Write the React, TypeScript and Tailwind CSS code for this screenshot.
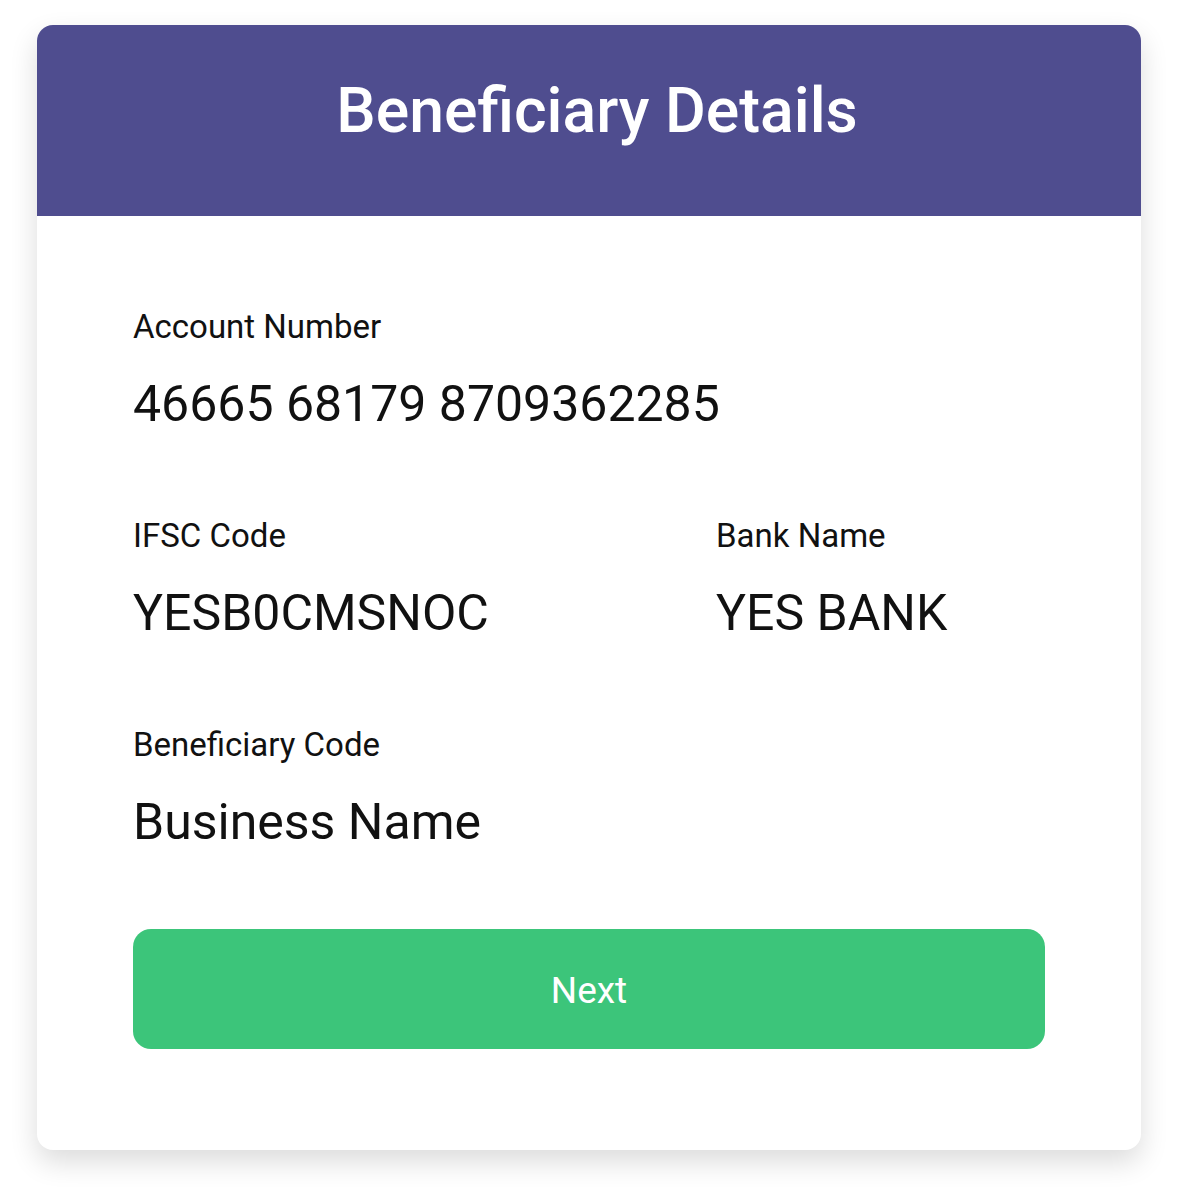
import React from "react";

const fields = [
  { label: "Account Number", value: "46665 68179 8709362285" },
];

const Field = ({ label, value }: { label: string; value: string }) => (
  <div className="flex flex-col">
    <div className="text-[33px] leading-none text-[#111]">{label}</div>
    <div className="mt-[36px] text-[50px] leading-none text-[#111]">{value}</div>
  </div>
);

export default function App() {
  return (
    <div className="min-h-screen bg-white pt-[25px] pl-[37px]" style={{ fontFamily: "Roboto, 'Liberation Sans', sans-serif" }}>
      <div className="w-[1104px] rounded-[16px] overflow-hidden bg-white shadow-[0_12px_28px_rgba(0,0,0,0.14)]">
        <div className="h-[191px] bg-[#4f4d8f] flex items-center justify-center pb-[18px] pl-[16px]">
          <h1 className="text-[62.5px] font-medium text-white leading-none">Beneficiary Details</h1>
        </div>
        <div className="px-[96px] pt-[94px] pb-[101px] flex flex-col">
          <div className="flex flex-col gap-[90px]">
            {fields.map((f) => (
              <Field key={f.label} label={f.label} value={f.value} />
            ))}
            <div className="grid grid-cols-[583px_1fr]">
              <Field label="IFSC Code" value="YESB0CMSNOC" />
              <Field label="Bank Name" value="YES BANK" />
            </div>
            <Field label="Beneficiary Code" value="Business Name" />
          </div>
          <button className="mt-[82px] h-[120px] w-full rounded-[18px] bg-[#3cc57a] text-white text-[37px] flex items-center justify-center pt-[4px]">
            Next
          </button>
        </div>
      </div>
    </div>
  );
}
